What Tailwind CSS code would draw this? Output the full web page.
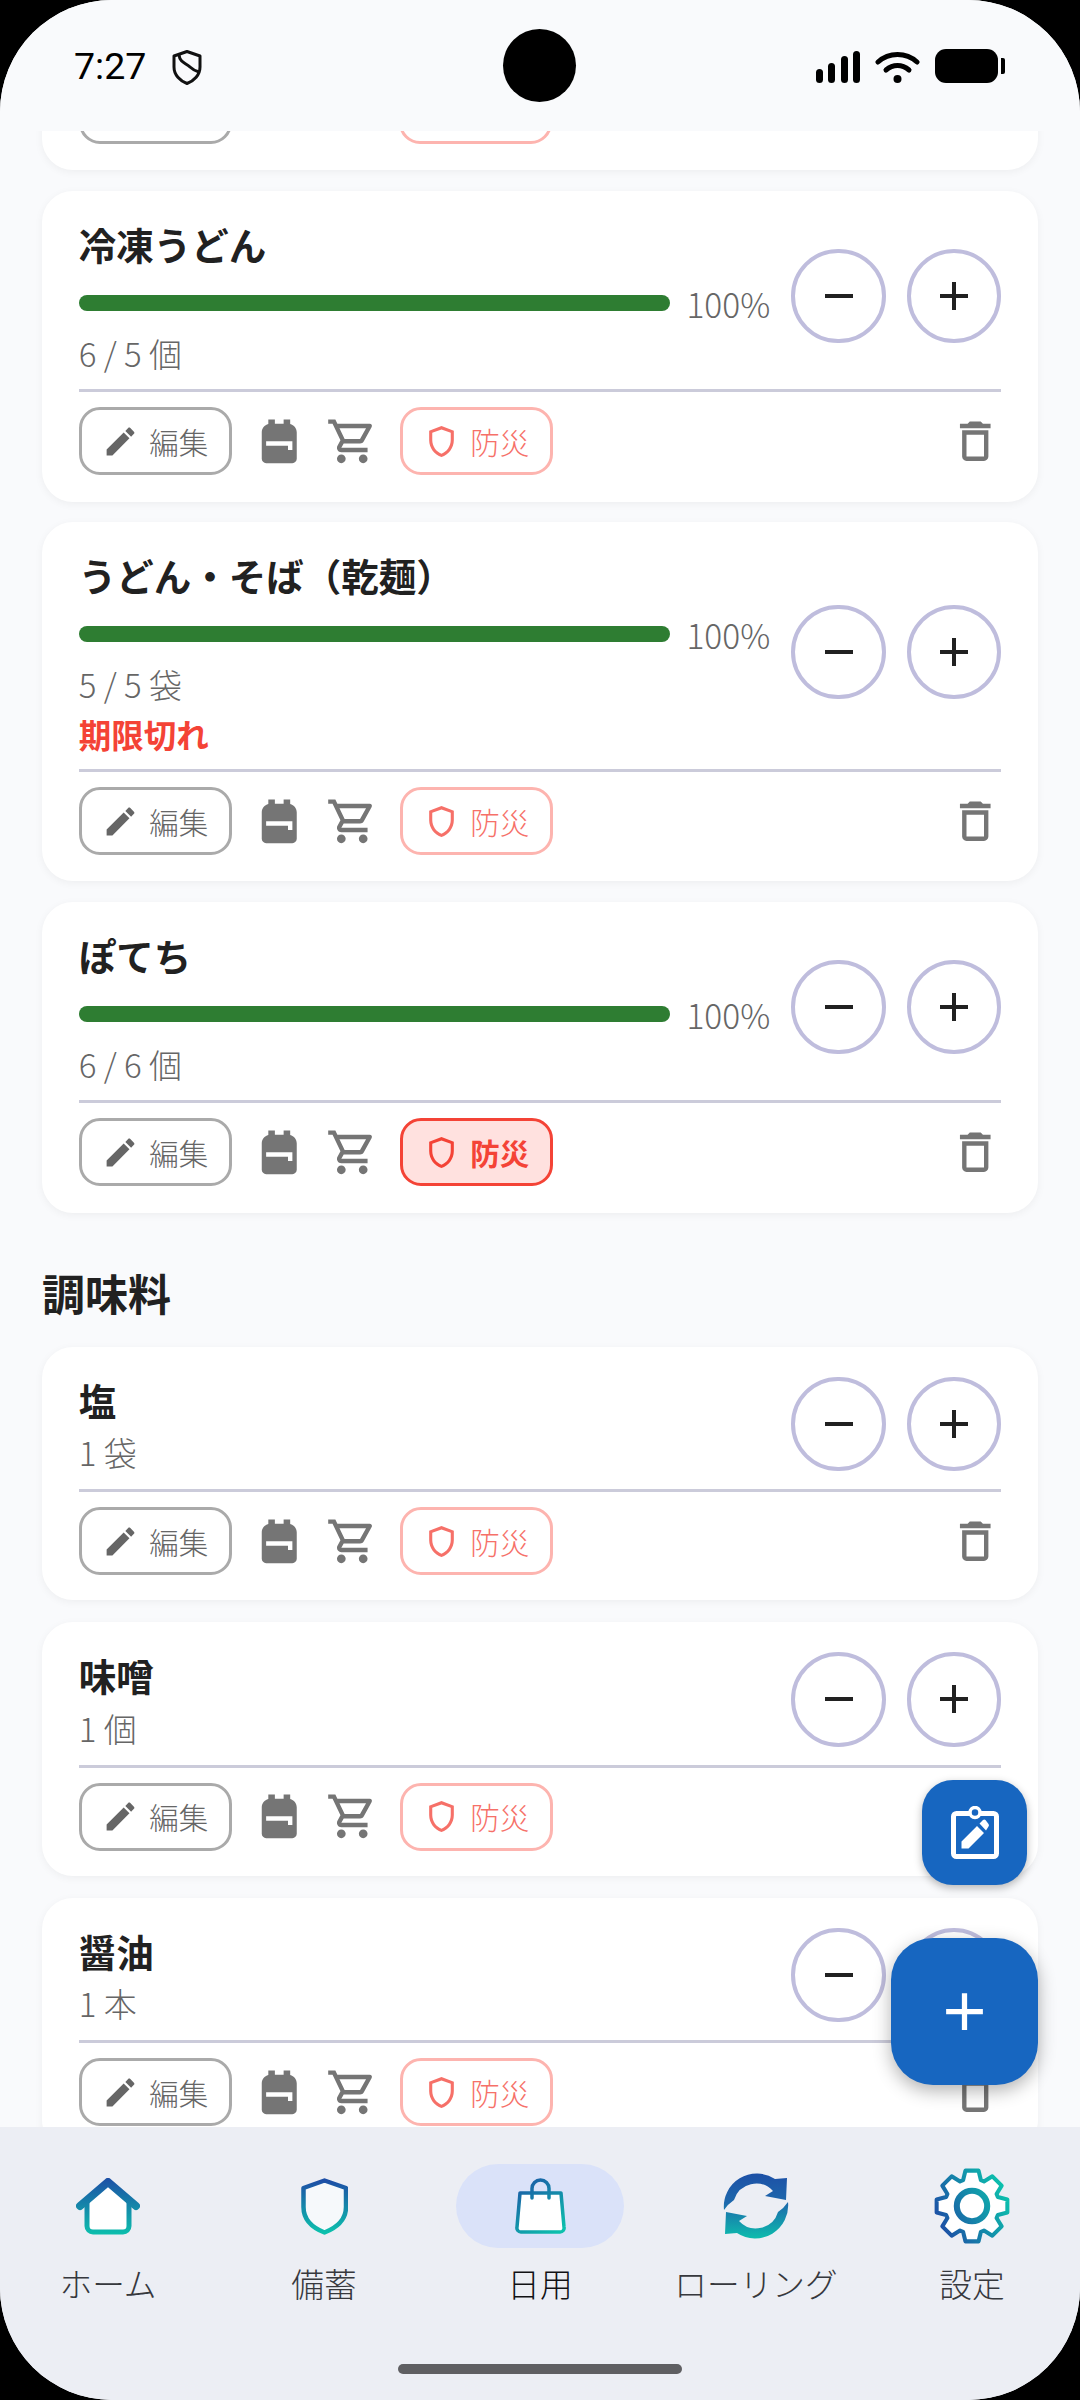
<!DOCTYPE html>
<html lang="ja">
<head>
<meta charset="utf-8">
<title>日用</title>
<script src="https://cdn.jsdelivr.net/npm/@tailwindcss/browser@4"></script>
</head>
<body class="bg-black">
<svg class="absolute w-0 h-0" aria-hidden="true">
  <defs>
    <linearGradient id="gv" x1="0" y1="0" x2="0" y2="1"><stop offset="0" stop-color="#1d4fa6"/><stop offset="1" stop-color="#0cc0ad"/></linearGradient>
    <linearGradient id="gh" gradientUnits="userSpaceOnUse" x1="0" y1="0" x2="0" y2="57"><stop offset="0" stop-color="#1d4fa6"/><stop offset="1" stop-color="#0cc0ad"/></linearGradient>
    <linearGradient id="gb" gradientUnits="userSpaceOnUse" x1="0" y1="0" x2="40" y2="58"><stop offset="0" stop-color="#1d4fa6"/><stop offset="1" stop-color="#0cc0ad"/></linearGradient>
    <linearGradient id="gr" gradientUnits="userSpaceOnUse" x1="0" y1="0" x2="0" y2="68"><stop offset="0" stop-color="#1d4fa6"/><stop offset="0.45" stop-color="#1d68ac"/><stop offset="1" stop-color="#0cc0ad"/></linearGradient>
    <linearGradient id="gg" gradientUnits="userSpaceOnUse" x1="-32" y1="20" x2="34" y2="-12"><stop offset="0" stop-color="#1d4fa6"/><stop offset="1" stop-color="#0cc0ad"/></linearGradient>
    <symbol id="i-edit" viewBox="0 0 24 24"><path fill="currentColor" d="M3 17.25V21h3.75L17.81 9.94l-3.75-3.75L3 17.25zM20.71 7.04c.39-.39.39-1.02 0-1.41l-2.34-2.34c-.39-.39-1.02-.39-1.41 0l-1.83 1.83 3.75 3.75 1.83-1.83z"/></symbol>
    <symbol id="i-pack" viewBox="0 0 24 24"><path fill="currentColor" d="M20 8v12c0 1.1-.9 2-2 2H6c-1.1 0-2-.9-2-2V8c0-1.86 1.28-3.41 3-3.86V2h3v2h4V2h3v2.14c1.72.45 3 2 3 3.86zM6 12v2h10v2h2v-4H6z"/></symbol>
    <symbol id="i-cart" viewBox="0 0 24 24"><path fill="currentColor" d="M15.55 13c.75 0 1.41-.41 1.75-1.03l3.58-6.49c.37-.66-.11-1.48-.87-1.48H5.21l-.94-2H1v2h2l3.6 7.59-1.35 2.44C4.52 15.37 5.48 17 7 17h12v-2H7l1.1-2h7.45zM6.16 6h12.15l-2.76 5H8.53L6.16 6zM7 18c-1.1 0-1.99.9-1.99 2S5.9 22 7 22s2-.9 2-2-.9-2-2-2zm10 0c-1.1 0-1.99.9-1.99 2s.89 2 1.99 2 2-.9 2-2-.9-2-2-2z"/></symbol>
    <symbol id="i-shield" viewBox="0 0 24 24"><path fill="currentColor" d="M12 2 4 5v6.09c0 5.05 3.41 9.76 8 10.91 4.59-1.15 8-5.86 8-10.91V5l-8-3zm6 9.09c0 4-2.55 7.7-6 8.83-3.45-1.13-6-4.82-6-8.83v-4.7l6-2.25 6 2.25v4.7z"/></symbol>
    <symbol id="i-trash" viewBox="0 0 24 24"><path fill="currentColor" d="M6 19c0 1.1.9 2 2 2h8c1.1 0 2-.9 2-2V7H6v12zM8 9h8v10H8V9zm7.5-5l-1-1h-5l-1 1H5v2h14V4h-3.5z"/></symbol>
    <symbol id="i-minus" viewBox="0 0 24 24"><path fill="currentColor" d="M19 13H5v-2h14v2z"/></symbol>
    <symbol id="i-plus" viewBox="0 0 24 24"><path fill="currentColor" d="M19 13h-6v6h-2v-6H5v-2h6V5h2v6h6v2z"/></symbol>
  </defs>
</svg>

<div class="relative w-[1080px] h-[2400px] overflow-hidden rounded-[112px] bg-[#f9fafc] flex flex-col font-['Noto_Sans_CJK_JP','Noto_Sans',sans-serif]">

  <!-- status bar -->
  <header class="relative z-10 h-[131px] shrink-0 bg-[#f9fafc] flex items-start justify-between pl-[74px] pr-[75px] pt-[49px]">
    <div class="flex items-center gap-[26px] h-[34px]">
      <span class="font-['Roboto',sans-serif] text-[37.5px] leading-[34px] text-black">7:27</span>
      <svg class="w-[30px] h-[35px] mt-[2px]" viewBox="0 0 30 35" fill="none" stroke="#111" stroke-width="3" stroke-linejoin="round"><path d="M15 1.5 28 6v11c0 8-6 14-13 16.5C8 31 2 25 2 17V6Z"/><path d="M7 5c1 8 7 8 11 12 3 3 6 4 9 5"/></svg>
    </div>
    <div class="flex items-center h-[34px]">
      <div class="flex items-end gap-[5.5px] h-[32px] mt-[1px]">
        <span class="w-[7px] h-[14px] rounded-full bg-black"></span>
        <span class="w-[7px] h-[20px] rounded-full bg-black"></span>
        <span class="w-[7px] h-[27px] rounded-full bg-black"></span>
        <span class="w-[7px] h-[32px] rounded-full bg-black"></span>
      </div>
      <svg class="w-[45px] h-[32px] ml-[15px] mt-[1px]" viewBox="0 0 45 32" fill="none" stroke="#000" stroke-linecap="round"><path stroke-width="5" d="M3 11c11-10 28-10 39 0"/><path stroke-width="5" d="M11 19c7-6 16-6 23 0"/><circle cx="22.5" cy="28" r="4" fill="#000" stroke="none"/></svg>
      <div class="w-[63px] h-[34px] ml-[15px] rounded-[11px] bg-black"></div>
      <div class="w-[4px] h-[16px] ml-[3px] rounded-r-[2px] bg-black"></div>
    </div>
    <div class="absolute left-[503px] top-[29px] w-[73px] h-[73px] rounded-full bg-black"></div>
  </header>

  <!-- list -->
  <main class="flex-1 min-h-0 overflow-hidden bg-[#f9fafc]">
    <div class="flex flex-col gap-[20.5px] px-[42px] -mt-[271px]">

      <!-- cut-off card -->
      <section class="h-[310px] shrink-0 rounded-[31px] bg-white shadow-[0_2px_8px_rgba(0,0,0,0.05)] px-[36.75px] pt-[216px]">
        <div class="flex items-center gap-[21px]">
          <div class="w-[153px] h-[68px] rounded-[21px] border-[3px] border-[#aaaaaa]"></div>
          <div class="w-[125px] h-[68px]"></div>
          <div class="w-[153px] h-[68px] rounded-[21px] border-[3px] border-[#fdb4af]"></div>
        </div>
      </section>

      <!-- 冷凍うどん -->
      <section class="rounded-[31px] bg-white shadow-[0_2px_8px_rgba(0,0,0,0.05)] px-[36.75px] pt-[31px] pb-[26.5px]">
        <div class="h-[148.5px] flex items-start gap-[21px]">
          <div class="flex-1 min-w-0">
            <h3 class="h-[44px] text-[37.5px] leading-[44px] font-bold text-[#212121]">冷凍うどん</h3>
            <div class="mt-[16px] h-[42px] flex items-center gap-[16px]"><div class="flex-1 h-[16px] rounded-full bg-[#2e7d32]"></div><span class="text-[33.5px] leading-[46px] mt-[2px] font-light text-[#666666]">100%</span></div>
            <p class="mt-[14px] h-[31px] text-[33px] leading-[31px] font-light text-[#666666]">6 / 5 個</p>
          </div>
          <div class="flex gap-[21px] mt-[27px]">
            <button class="w-[94.5px] h-[94.5px] rounded-full border-[4px] border-[#bfbddd] flex items-center justify-center text-[#212121]"><svg class="w-[48px] h-[48px]"><use href="#i-minus"/></svg></button>
            <button class="w-[94.5px] h-[94.5px] rounded-full border-[4px] border-[#bfbddd] flex items-center justify-center text-[#212121]"><svg class="w-[48px] h-[48px]"><use href="#i-plus"/></svg></button>
          </div>
        </div>
        <div class="mt-[19px] h-[3px] bg-[#cbcbda]"></div>
        <div class="mt-[15px] h-[68px] flex items-center gap-[21px] text-[#757575]">
          <button class="w-[153px] h-[68px] rounded-[21px] border-[3px] border-[#aaaaaa] flex items-center justify-center gap-[10px] text-[29.5px] font-light text-[#666666]"><svg class="w-[37px] h-[37px]"><use href="#i-edit"/></svg>編集</button>
          <svg class="w-[52.5px] h-[52.5px]"><use href="#i-pack"/></svg>
          <svg class="w-[52.5px] h-[52.5px]"><use href="#i-cart"/></svg>
          <button class="w-[153px] h-[68px] rounded-[21px] border-[3px] border-[#fdb4af] flex items-center justify-center gap-[10px] text-[29.5px] font-light text-[#f67068]"><svg class="w-[37px] h-[37px]"><use href="#i-shield"/></svg>防災</button>
          <svg class="w-[52.5px] h-[52.5px] ml-auto"><use href="#i-trash"/></svg>
        </div>
      </section>

      <!-- うどん・そば（乾麺） -->
      <section class="rounded-[31px] bg-white shadow-[0_2px_8px_rgba(0,0,0,0.05)] px-[36.75px] pt-[31px] pb-[26px]">
        <div class="h-[198px] flex items-start gap-[21px]">
          <div class="flex-1 min-w-0">
            <h3 class="h-[44px] text-[37.5px] leading-[44px] font-bold text-[#212121]">うどん・そば（乾麺）</h3>
            <div class="mt-[16px] h-[42px] flex items-center gap-[16px]"><div class="flex-1 h-[16px] rounded-full bg-[#2e7d32]"></div><span class="text-[33.5px] leading-[46px] mt-[2px] font-light text-[#666666]">100%</span></div>
            <p class="mt-[14px] h-[31px] text-[33px] leading-[31px] font-light text-[#666666]">5 / 5 袋</p>
            <p class="mt-[18px] h-[31px] text-[32.5px] leading-[31px] font-bold text-[#f44336]">期限切れ</p>
          </div>
          <div class="flex gap-[21px] mt-[51.75px]">
            <button class="w-[94.5px] h-[94.5px] rounded-full border-[4px] border-[#bfbddd] flex items-center justify-center text-[#212121]"><svg class="w-[48px] h-[48px]"><use href="#i-minus"/></svg></button>
            <button class="w-[94.5px] h-[94.5px] rounded-full border-[4px] border-[#bfbddd] flex items-center justify-center text-[#212121]"><svg class="w-[48px] h-[48px]"><use href="#i-plus"/></svg></button>
          </div>
        </div>
        <div class="mt-[18px] h-[3px] bg-[#cbcbda]"></div>
        <div class="mt-[15px] h-[68px] flex items-center gap-[21px] text-[#757575]">
          <button class="w-[153px] h-[68px] rounded-[21px] border-[3px] border-[#aaaaaa] flex items-center justify-center gap-[10px] text-[29.5px] font-light text-[#666666]"><svg class="w-[37px] h-[37px]"><use href="#i-edit"/></svg>編集</button>
          <svg class="w-[52.5px] h-[52.5px]"><use href="#i-pack"/></svg>
          <svg class="w-[52.5px] h-[52.5px]"><use href="#i-cart"/></svg>
          <button class="w-[153px] h-[68px] rounded-[21px] border-[3px] border-[#fdb4af] flex items-center justify-center gap-[10px] text-[29.5px] font-light text-[#f67068]"><svg class="w-[37px] h-[37px]"><use href="#i-shield"/></svg>防災</button>
          <svg class="w-[52.5px] h-[52.5px] ml-auto"><use href="#i-trash"/></svg>
        </div>
      </section>

      <!-- ぽてち -->
      <section class="rounded-[31px] bg-white shadow-[0_2px_8px_rgba(0,0,0,0.05)] px-[36.75px] pt-[31px] pb-[26.5px]">
        <div class="h-[148.5px] flex items-start gap-[21px]">
          <div class="flex-1 min-w-0">
            <h3 class="h-[44px] text-[37.5px] leading-[44px] font-bold text-[#212121]">ぽてち</h3>
            <div class="mt-[16px] h-[42px] flex items-center gap-[16px]"><div class="flex-1 h-[16px] rounded-full bg-[#2e7d32]"></div><span class="text-[33.5px] leading-[46px] mt-[2px] font-light text-[#666666]">100%</span></div>
            <p class="mt-[14px] h-[31px] text-[33px] leading-[31px] font-light text-[#666666]">6 / 6 個</p>
          </div>
          <div class="flex gap-[21px] mt-[27px]">
            <button class="w-[94.5px] h-[94.5px] rounded-full border-[4px] border-[#bfbddd] flex items-center justify-center text-[#212121]"><svg class="w-[48px] h-[48px]"><use href="#i-minus"/></svg></button>
            <button class="w-[94.5px] h-[94.5px] rounded-full border-[4px] border-[#bfbddd] flex items-center justify-center text-[#212121]"><svg class="w-[48px] h-[48px]"><use href="#i-plus"/></svg></button>
          </div>
        </div>
        <div class="mt-[19px] h-[3px] bg-[#cbcbda]"></div>
        <div class="mt-[15px] h-[68px] flex items-center gap-[21px] text-[#757575]">
          <button class="w-[153px] h-[68px] rounded-[21px] border-[3px] border-[#aaaaaa] flex items-center justify-center gap-[10px] text-[29.5px] font-light text-[#666666]"><svg class="w-[37px] h-[37px]"><use href="#i-edit"/></svg>編集</button>
          <svg class="w-[52.5px] h-[52.5px]"><use href="#i-pack"/></svg>
          <svg class="w-[52.5px] h-[52.5px]"><use href="#i-cart"/></svg>
          <button class="w-[153px] h-[68px] rounded-[21px] border-[3px] border-[#f44336] bg-[#ffe1df] flex items-center justify-center gap-[10px] text-[29.5px] font-bold text-[#f44336]"><svg class="w-[37px] h-[37px]"><use href="#i-shield"/></svg>防災</button>
          <svg class="w-[52.5px] h-[52.5px] ml-auto"><use href="#i-trash"/></svg>
        </div>
      </section>

      <h2 class="h-[93px] pt-[34px] text-[43px] leading-[50px] font-bold text-[#212121]">調味料</h2>

      <!-- 塩 -->
      <section class="rounded-[31px] bg-white shadow-[0_2px_8px_rgba(0,0,0,0.05)] px-[36.75px] pt-[30px] pb-[25px]">
        <div class="flex items-start gap-[21px]">
          <div class="flex-1 min-w-0">
            <h3 class="h-[46px] text-[37.5px] leading-[46px] font-bold text-[#212121]">塩</h3>
            <p class="mt-[14.5px] h-[31px] text-[33px] leading-[31px] font-light text-[#666666]">1 袋</p>
          </div>
          <div class="flex gap-[21px]">
            <button class="w-[94.5px] h-[94.5px] rounded-full border-[4px] border-[#bfbddd] flex items-center justify-center text-[#212121]"><svg class="w-[48px] h-[48px]"><use href="#i-minus"/></svg></button>
            <button class="w-[94.5px] h-[94.5px] rounded-full border-[4px] border-[#bfbddd] flex items-center justify-center text-[#212121]"><svg class="w-[48px] h-[48px]"><use href="#i-plus"/></svg></button>
          </div>
        </div>
        <div class="mt-[18px] h-[3px] bg-[#cbcbda]"></div>
        <div class="mt-[15px] h-[68px] flex items-center gap-[21px] text-[#757575]">
          <button class="w-[153px] h-[68px] rounded-[21px] border-[3px] border-[#aaaaaa] flex items-center justify-center gap-[10px] text-[29.5px] font-light text-[#666666]"><svg class="w-[37px] h-[37px]"><use href="#i-edit"/></svg>編集</button>
          <svg class="w-[52.5px] h-[52.5px]"><use href="#i-pack"/></svg>
          <svg class="w-[52.5px] h-[52.5px]"><use href="#i-cart"/></svg>
          <button class="w-[153px] h-[68px] rounded-[21px] border-[3px] border-[#fdb4af] flex items-center justify-center gap-[10px] text-[29.5px] font-light text-[#f67068]"><svg class="w-[37px] h-[37px]"><use href="#i-shield"/></svg>防災</button>
          <svg class="w-[52.5px] h-[52.5px] ml-auto"><use href="#i-trash"/></svg>
        </div>
      </section>

      <!-- 味噌 -->
      <section class="mt-[1.5px] rounded-[31px] bg-white shadow-[0_2px_8px_rgba(0,0,0,0.05)] px-[36.75px] pt-[30px] pb-[25px]">
        <div class="flex items-start gap-[21px]">
          <div class="flex-1 min-w-0">
            <h3 class="h-[46px] text-[37.5px] leading-[46px] font-bold text-[#212121]">味噌</h3>
            <p class="mt-[14.5px] h-[31px] text-[33px] leading-[31px] font-light text-[#666666]">1 個</p>
          </div>
          <div class="flex gap-[21px]">
            <button class="w-[94.5px] h-[94.5px] rounded-full border-[4px] border-[#bfbddd] flex items-center justify-center text-[#212121]"><svg class="w-[48px] h-[48px]"><use href="#i-minus"/></svg></button>
            <button class="w-[94.5px] h-[94.5px] rounded-full border-[4px] border-[#bfbddd] flex items-center justify-center text-[#212121]"><svg class="w-[48px] h-[48px]"><use href="#i-plus"/></svg></button>
          </div>
        </div>
        <div class="mt-[18px] h-[3px] bg-[#cbcbda]"></div>
        <div class="mt-[15px] h-[68px] flex items-center gap-[21px] text-[#757575]">
          <button class="w-[153px] h-[68px] rounded-[21px] border-[3px] border-[#aaaaaa] flex items-center justify-center gap-[10px] text-[29.5px] font-light text-[#666666]"><svg class="w-[37px] h-[37px]"><use href="#i-edit"/></svg>編集</button>
          <svg class="w-[52.5px] h-[52.5px]"><use href="#i-pack"/></svg>
          <svg class="w-[52.5px] h-[52.5px]"><use href="#i-cart"/></svg>
          <button class="w-[153px] h-[68px] rounded-[21px] border-[3px] border-[#fdb4af] flex items-center justify-center gap-[10px] text-[29.5px] font-light text-[#f67068]"><svg class="w-[37px] h-[37px]"><use href="#i-shield"/></svg>防災</button>
          <svg class="w-[52.5px] h-[52.5px] ml-auto"><use href="#i-trash"/></svg>
        </div>
      </section>

      <!-- 醤油 -->
      <section class="mt-[1.5px] rounded-[31px] bg-white shadow-[0_2px_8px_rgba(0,0,0,0.05)] px-[36.75px] pt-[30px] pb-[25px]">
        <div class="flex items-start gap-[21px]">
          <div class="flex-1 min-w-0">
            <h3 class="h-[46px] text-[37.5px] leading-[46px] font-bold text-[#212121]">醤油</h3>
            <p class="mt-[14.5px] h-[31px] text-[33px] leading-[31px] font-light text-[#666666]">1 本</p>
          </div>
          <div class="flex gap-[21px]">
            <button class="w-[94.5px] h-[94.5px] rounded-full border-[4px] border-[#bfbddd] flex items-center justify-center text-[#212121]"><svg class="w-[48px] h-[48px]"><use href="#i-minus"/></svg></button>
            <button class="w-[94.5px] h-[94.5px] rounded-full border-[4px] border-[#bfbddd] flex items-center justify-center text-[#212121]"><svg class="w-[48px] h-[48px]"><use href="#i-plus"/></svg></button>
          </div>
        </div>
        <div class="mt-[18px] h-[3px] bg-[#cbcbda]"></div>
        <div class="mt-[15px] h-[68px] flex items-center gap-[21px] text-[#757575]">
          <button class="w-[153px] h-[68px] rounded-[21px] border-[3px] border-[#aaaaaa] flex items-center justify-center gap-[10px] text-[29.5px] font-light text-[#666666]"><svg class="w-[37px] h-[37px]"><use href="#i-edit"/></svg>編集</button>
          <svg class="w-[52.5px] h-[52.5px]"><use href="#i-pack"/></svg>
          <svg class="w-[52.5px] h-[52.5px]"><use href="#i-cart"/></svg>
          <button class="w-[153px] h-[68px] rounded-[21px] border-[3px] border-[#fdb4af] flex items-center justify-center gap-[10px] text-[29.5px] font-light text-[#f67068]"><svg class="w-[37px] h-[37px]"><use href="#i-shield"/></svg>防災</button>
          <svg class="w-[52.5px] h-[52.5px] ml-auto"><use href="#i-trash"/></svg>
        </div>
      </section>
    </div>
  </main>

  <!-- bottom nav -->
  <nav class="relative z-10 h-[273px] shrink-0 bg-[#eceef4] grid grid-cols-5 items-start text-[32.7px] leading-[42px] font-light text-[#36383d]">
    <div class="flex flex-col items-center pt-[37px]">
      <div class="w-[168px] h-[84px] flex items-center justify-center">
        <svg class="w-[64px] h-[57px]" viewBox="0 0 64 57" fill="none"><path fill="#fff" d="M32 6 11 24v24a6 6 0 0 0 6 6h30a6 6 0 0 0 6-6V24Z"/><path stroke="url(#gh)" stroke-width="5" d="M11 24v24a6 6 0 0 0 6 6h30a6 6 0 0 0 6-6V24"/><path stroke="url(#gh)" stroke-width="8" stroke-linecap="round" stroke-linejoin="round" d="M4 28 32 4l28 24"/></svg>
      </div>
      <span class="mt-[14px]">ホーム</span>
    </div>
    <div class="flex flex-col items-center pt-[37px]">
      <div class="w-[168px] h-[84px] flex items-center justify-center">
        <svg class="w-[47px] h-[57px]" viewBox="0 0 47 57"><path fill="#f6f9fb" stroke="url(#gv)" stroke-width="4.5" stroke-linejoin="round" d="M23.5 2.5 45 10v19c0 13-10 21-21.500 25.500C12 50 2.500 42 2.500 29V10Z"/></svg>
      </div>
      <span class="mt-[14px]">備蓄</span>
    </div>
    <div class="flex flex-col items-center pt-[37px]">
      <div class="w-[168px] h-[84px] rounded-full bg-[#dae2f9] flex items-center justify-center">
        <svg class="w-[51px] h-[58px]" viewBox="0 0 51 58" fill="none"><path fill="#fff" stroke="url(#gb)" stroke-width="3.500" stroke-linejoin="round" d="M5 16h41l3 34a4 4 0 0 1-4 5H6a4 4 0 0 1-4-5Z"/><path stroke="url(#gb)" stroke-width="3.500" stroke-linecap="round" d="M17 21v-9.500a8.500 8.500 0 0 1 17 0V21"/></svg>
      </div>
      <span class="mt-[14px] text-[#111114]">日用</span>
    </div>
    <div class="flex flex-col items-center pt-[37px]">
      <div class="w-[168px] h-[84px] flex items-center justify-center">
        <svg class="w-[68px] h-[68px]" viewBox="0 0 68 68"><path fill="url(#gr)" d="M2 38A33 33 0 0 1 53 7l12-1-1 22-21-4 8-5A23 23 0 0 0 12 28q-6 4-10 10Z"/><path fill="url(#gr)" d="M66 30A33 33 0 0 1 15 61L3 62l1-22 21 4-8 5a23 23 0 0 0 39-9q6-4 10-10Z"/></svg>
      </div>
      <span class="mt-[14px] whitespace-nowrap">ローリング</span>
    </div>
    <div class="flex flex-col items-center pt-[37px]">
      <div class="w-[168px] h-[84px] flex items-center justify-center">
        <svg class="w-[78px] h-[78px]" viewBox="-38.5 -38.5 77 77"><path fill="#fff" stroke="url(#gg)" stroke-width="4" stroke-linejoin="round" d="M-8.800-25.500-6.500-34.900H6.500L8.800-25.500 11.800-24.250 20.100-29.300 29.300-20.100 24.250-11.800 25.500-8.800 34.900-6.500V6.500L25.500 8.800 24.250 11.800 29.300 20.100 20.100 29.300 11.800 24.250 8.800 25.500 6.500 34.900H-6.500L-8.800 25.500-11.800 24.250-20.100 29.300-29.300 20.100-24.250 11.800-25.500 8.800-34.900 6.500V-6.500L-25.500-8.800-24.250-11.800-29.300-20.100-20.100-29.300-11.800-24.250Z"/><circle r="15" fill="#fff" stroke="url(#gg)" stroke-width="6"/></svg>
      </div>
      <span class="mt-[14px]">設定</span>
    </div>
    <div class="absolute left-[398px] top-[237px] w-[284px] h-[10px] rounded-full bg-[#5f5f62]"></div>
  </nav>

  <!-- floating buttons -->
  <button class="absolute z-20 left-[922px] top-[1780px] w-[105px] h-[105px] rounded-[31px] bg-[#1766c0] shadow-[0_3px_8px_rgba(0,0,0,0.28)] flex items-center justify-center">
    <svg class="w-[48px] h-[53px]" viewBox="0 0 48 53" fill="none"><rect x="2.500" y="7.500" width="43" height="43" rx="3" stroke="#fff" stroke-width="5"/><circle cx="24" cy="6.500" r="5" fill="#1766c0" stroke="#fff" stroke-width="3.500"/><path fill="#fff" d="M10.500 35.500 26 20l7 7-15.500 15.500h-7ZM28.500 17.500l3.500-3.500a2 2 0 0 1 2.500 0l3 4a2 2 0 0 1 0 2.500l-2.500 4Z"/></svg>
  </button>
  <button class="absolute z-20 left-[891px] top-[1938px] w-[147px] h-[147px] rounded-[42px] bg-[#1766c0] shadow-[0_6px_18px_rgba(0,0,0,0.3)] flex items-center justify-center text-white">
    <svg class="w-[63px] h-[63px]"><use href="#i-plus"/></svg>
  </button>
</div>
</body>
</html>
